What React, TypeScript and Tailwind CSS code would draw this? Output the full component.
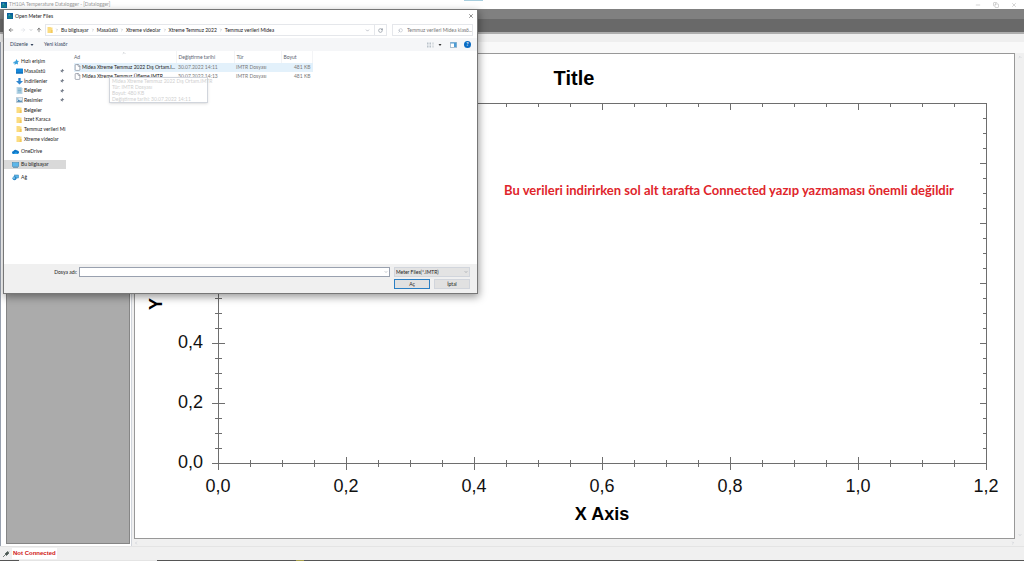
import { useState } from 'react';
import type { ReactNode } from 'react';
import {
  ArrowLeft,
  ArrowRight,
  ArrowUp,
  ChevronDown,
  ChevronRight,
  ChevronUp,
  Copy,
  File,
  Minus,
  Pin,
  RotateCw,
  Search,
  X,
} from 'lucide-react';

const CRUMBS = ['Bu bilgisayar', 'Masaüstü', 'Xtreme videolar', 'Xtreme Temmuz 2022', 'Temmuz verileri Midea'];

const FILES = [
  { name: 'Midea Xtreme Temmuz 2022 Dış Ortam.I...', date: '30.07.2022 14:11', type: 'IMTR Dosyası', size: '481 KB' },
  { name: 'Midea Xtreme Temmuz Üfleme.IMTR', date: '30.07.2022 14:13', type: 'IMTR Dosyası', size: '481 KB' },
];

// ---------- Icons ----------

function AppIcon() {
  return (
    <svg viewBox="0 0 12 12" className="size-[6px] shrink-0">
      <rect width="12" height="12" fill="#0b5c9c" />
      <path d="M1 11V6l4-4 4 2 2 5v2z" fill="#14808f" />
      <path d="M3 3h3v2H3z" fill="#4fb3c9" />
    </svg>
  );
}

function FolderIcon() {
  return (
    <svg viewBox="0 0 12 12" className="size-[6px] shrink-0">
      <path d="M1 0h6l1 1h3v11H1z" fill="#fbdc80" />
      <path d="M8 6h3v6H7z" fill="#f3c95c" />
    </svg>
  );
}

function StarIcon() {
  return (
    <svg viewBox="0 0 12 12" className="size-[6px] shrink-0">
      <path d="M7 0l1.500 3.500L12 4 9.500 7l.5 4-3.500-1.500L3 12l.5-4L1 6l4-1.500z" fill="#3aa0dc" />
      <path d="M0 7h4v1.500H0z" fill="#3aa0dc" />
    </svg>
  );
}

function DesktopIcon() {
  return (
    <svg viewBox="0 0 14 12" className="h-[6px] w-[7px] shrink-0">
      <rect y="1" width="14" height="10" rx="1" fill="#1687d9" />
      <rect y="9" width="14" height="2" fill="#0c66ac" />
    </svg>
  );
}

function DownloadIcon() {
  return (
    <svg viewBox="0 0 12 12" className="size-[7px] shrink-0">
      <path d="M4 0h4v5h4l-6 6-6-6h4z" fill="#2f86cf" />
    </svg>
  );
}

function DocumentIcon() {
  return (
    <svg viewBox="0 0 12 12" className="size-[7px] shrink-0">
      <path d="M1 0h8l2 2v10H1z" fill="#b9d6e6" />
      <path d="M3 3h6v1H3zM3 5.500h6v1H3zM3 8h6v1H3z" fill="#4f93b8" />
    </svg>
  );
}

function PictureIcon() {
  return (
    <svg viewBox="0 0 14 12" className="h-[6px] w-[7px] shrink-0">
      <rect x=".5" y="1.500" width="13" height="9" fill="#dfeaf2" stroke="#8fa6b5" />
      <path d="M1.500 9.500l4-4 3 2.500 2-1.500 2 3z" fill="#3277a8" />
      <rect x="2" y="3" width="3" height="2" fill="#5aa5d8" />
    </svg>
  );
}

function CloudIcon() {
  return (
    <svg viewBox="0 0 14 12" className="h-[6px] w-[7px] shrink-0">
      <path d="M3 10a3 3 0 010-6 4 4 0 017-1 3.500 3.500 0 011 7z" fill="#0f78c8" />
      <path d="M3 10l5-4 4 4z" fill="#2fa3ea" />
    </svg>
  );
}

function ComputerIcon() {
  return (
    <svg viewBox="0 0 14 12" className="h-[6px] w-[7px] shrink-0">
      <rect x=".5" y="1" width="13" height="8" fill="#5cb7ea" stroke="#3d83b2" />
      <path d="M2 10h10v1.500H2z" fill="#4a88b2" />
    </svg>
  );
}

function NetworkIcon() {
  return (
    <svg viewBox="0 0 14 12" className="h-[7px] w-[7px] shrink-0">
      <rect x="5" y="1" width="8" height="6" fill="#5cb7ea" stroke="#2b79b0" />
      <circle cx="5" cy="7.500" r="4" fill="#2a86c6" />
      <path d="M3 5l3 1-1 3-3-1z" fill="#8fd3f4" />
    </svg>
  );
}

function PlugIcon() {
  return (
    <svg viewBox="0 0 14 12" className="h-[6px] w-[7px] shrink-0">
      <path d="M0 12l4-4M4 6l5-5 3 3-5 5z" fill="#4d5a55" stroke="#4d5a55" strokeWidth="1.500" />
      <path d="M10 3l3-3" stroke="#8b9691" />
    </svg>
  );
}

// ---------- File dialog ----------

type Place = { label: string; icon: ReactNode; pinned?: boolean };

const QUICK: Place[] = [
  { label: 'Masaüstü', icon: <DesktopIcon />, pinned: true },
  { label: 'İndirilenler', icon: <DownloadIcon />, pinned: true },
  { label: 'Belgeler', icon: <DocumentIcon />, pinned: true },
  { label: 'Resimler', icon: <PictureIcon />, pinned: true },
  { label: 'Belgeler', icon: <FolderIcon /> },
  { label: 'Izzet Karaca', icon: <FolderIcon /> },
  { label: 'Temmuz verileri Mi', icon: <FolderIcon /> },
  { label: 'Xtreme videolar', icon: <FolderIcon /> },
];

function Sidebar() {
  return (
    <nav className="w-[62px] shrink-0 pt-[6px]">
      <ul className="grid h-[87px] auto-rows-fr">
        <li className="flex items-center gap-[2px] pl-[9px]">
          <StarIcon />
          <span>Hızlı erişim</span>
        </li>
        {QUICK.map((place, i) => (
          <li key={i} className="flex items-center pl-3">
            <span className="flex w-2 shrink-0">{place.icon}</span>
            <span className="whitespace-nowrap">{place.label}</span>
            {place.pinned && <Pin className="mr-[2px] ml-auto size-[4px] shrink-0 rotate-45 fill-gray-500 text-gray-500" />}
          </li>
        ))}
      </ul>
      <ul className="mt-[3px] space-y-1">
        <li className="flex h-[9px] items-center gap-[2px] pl-2">
          <CloudIcon />
          OneDrive
        </li>
        <li className="flex h-[9px] items-center gap-[2px] bg-[#d9d9d9] pl-2">
          <ComputerIcon />
          Bu bilgisayar
        </li>
        <li className="flex h-[9px] items-center gap-[2px] pl-2">
          <NetworkIcon />
          Ağ
        </li>
      </ul>
    </nav>
  );
}

function FileList() {
  return (
    <div className="relative min-w-0 flex-1 pl-2">
      <table className="w-[239px] table-fixed border-collapse text-left">
        <thead>
          <tr className="h-[12px] text-[#5c6470]">
            <th className="relative w-[102px] border-r border-gray-100 p-0 font-normal">
              Ad
              <ChevronUp className="absolute top-0 left-12 size-[4px] text-gray-500" />
            </th>
            <th className="w-[58px] border-r border-gray-100 p-0 pl-[2px] font-normal">Değiştirme tarihi</th>
            <th className="w-[47px] border-r border-gray-100 p-0 pl-[2px] font-normal">Tür</th>
            <th className="border-r border-gray-100 p-0 pl-[2px] font-normal">Boyut</th>
          </tr>
        </thead>
        <tbody>
          {FILES.map((file, i) => (
            <tr key={file.name} className={i === 0 ? 'h-[9px] bg-[#e3f1fb]' : 'h-[9px]'}>
              <td className="p-0">
                <div className="flex items-center gap-px whitespace-nowrap">
                  <File className="size-[7px] shrink-0 fill-white text-gray-500" strokeWidth={2} />
                  {file.name}
                </div>
              </td>
              <td className="p-0 pl-[2px] whitespace-nowrap text-[#7a7a7a]">{file.date}</td>
              <td className="p-0 pl-[2px] whitespace-nowrap text-[#7a7a7a]">{file.type}</td>
              <td className="p-0 pr-[2px] text-right whitespace-nowrap text-[#7a7a7a]">{file.size}</td>
            </tr>
          ))}
        </tbody>
      </table>

      {/* Hover tooltip, fading in over the rows */}
      <div className="absolute top-[26px] left-[43px] w-[99px] border border-gray-300 bg-white/60 px-[2px] leading-[6px] whitespace-nowrap text-[#cfcfcf] shadow-sm">
        <p>Midea Xtreme Temmuz 2022 Dış Ortam.IMTR</p>
        <p>Tür: IMTR Dosyası</p>
        <p>Boyut: 480 KB</p>
        <p>Değiştirme tarihi: 30.07.2022 14:11</p>
      </div>
    </div>
  );
}

function OpenDialog() {
  const [fileName, setFileName] = useState('');

  return (
    <section
      aria-label="Open Meter Files"
      className="absolute top-[9px] left-[3px] flex h-[285px] w-[475px] flex-col border border-[#777] bg-white font-['Lato','Liberation_Sans',sans-serif] text-[5px] leading-[7px] text-[#222] shadow-[1px_3px_8px_rgba(0,0,0,0.4)]"
    >
      <header className="flex h-[12px] items-center gap-[2px] px-[3px]">
        <AppIcon />
        <h2>Open Meter Files</h2>
        <button aria-label="Kapat" className="ml-auto">
          <X className="size-[6px]" />
        </button>
      </header>

      {/* Address bar */}
      <div className="flex h-[16px] items-center px-1">
        <button aria-label="Geri"><ArrowLeft className="size-[6px]" /></button>
        <button aria-label="İleri" className="ml-[6px]"><ArrowRight className="size-[6px] text-gray-300" /></button>
        <button aria-label="Son konumlar" className="ml-[3px]"><ChevronDown className="size-[4px] text-gray-500" /></button>
        <button aria-label="Yukarı" className="ml-[3px]"><ArrowUp className="size-[6px]" /></button>
        <div className="ml-[3px] flex h-[12px] flex-1 items-center border border-gray-200 pl-px">
          <FolderIcon />
          {CRUMBS.map((crumb) => (
            <span key={crumb} className="flex items-center whitespace-nowrap">
              <ChevronRight className="mx-[2px] size-[4px] text-gray-500" />
              {crumb}
            </span>
          ))}
          <ChevronDown className="mr-[4px] ml-auto size-[5px] text-gray-500" />
          <button aria-label="Yenile" className="flex h-full w-[12px] items-center justify-center border-l border-gray-200">
            <RotateCw className="size-[5px] text-gray-600" />
          </button>
        </div>
        <label className="ml-[5px] flex h-[12px] w-[81px] items-center gap-[4px] border border-gray-200 pl-[5px]">
          <Search className="size-[5px] shrink-0 -scale-x-100 text-gray-400" />
          <input
            aria-label="Ara"
            placeholder="Temmuz verileri Midea klasö..."
            className="w-full min-w-0 outline-none placeholder:text-[#777]"
          />
        </label>
      </div>

      {/* Command bar */}
      <div className="flex h-[13px] items-center bg-[#f5f6f8] px-[6px] text-[#33435c]">
        <button className="flex items-center gap-[2px]">
          Düzenle
          <svg viewBox="0 0 6 4" className="h-[2px] w-[4px]"><path d="M0 0h6L3 4z" fill="#33435c" /></svg>
        </button>
        <button className="ml-[10px]">Yeni klasör</button>
        <button aria-label="Görünüm" className="ml-auto flex items-center gap-[4px]">
          <svg viewBox="0 0 14 12" className="h-[6px] w-[7px]">
            <path d="M0 1h3v4H0zM5 1h3v4H5zM0 7h3v4H0zM5 7h3v4H5z" fill="#b9c2ca" />
            <path d="M10 2h4M10 4h4M10 8h4M10 10h4" stroke="#b9c2ca" />
          </svg>
          <svg viewBox="0 0 6 4" className="h-[2px] w-[4px]"><path d="M0 0h6L3 4z" fill="#333" /></svg>
        </button>
        <button aria-label="Önizleme bölmesi" className="ml-[8px]">
          <svg viewBox="0 0 14 12" className="h-[6px] w-[7px]">
            <rect x=".5" y="1.500" width="13" height="9" fill="#fff" stroke="#5d86a6" />
            <path d="M8 2h5v8H8zM1 1h12v2H1z" fill="#4c9bd4" />
          </svg>
        </button>
        <button aria-label="Yardım" className="ml-[7px] flex size-[7px] items-center justify-center rounded-full bg-[#0a6cc4] font-bold text-white">
          ?
        </button>
      </div>

      <div className="flex min-h-0 flex-1">
        <Sidebar />
        <FileList />
      </div>

      <footer className="grid gap-[2px] bg-[#f0f0f0] pt-[3px] pr-[7px] pb-[4px]">
        <div className="flex h-[10px] items-center">
          <label htmlFor="file-name" className="w-[75px] pr-[2px] text-right">Dosya adı:</label>
          <div className="relative h-full flex-1">
            <input
              id="file-name"
              value={fileName}
              onChange={(e) => setFileName(e.target.value)}
              className="block h-full w-full border border-gray-400 bg-white px-[2px] outline-none"
            />
            <ChevronDown className="absolute top-[3px] right-[2px] size-[4px] text-gray-600" />
          </div>
          <div className="relative ml-1 h-full w-[76px]">
            <select aria-label="Dosya türü" className="block h-full w-full appearance-none border border-gray-300 bg-[#e3e3e3] px-px">
              <option>Meter Files(*.IMTR)</option>
            </select>
            <ChevronDown className="absolute top-[3px] right-[2px] size-[4px] text-gray-600" />
          </div>
        </div>
        <div className="flex h-[10px] justify-end gap-1">
          <button className="w-[36px] border border-[#2a7fc4] bg-[#e1e1e1] leading-[6px]">Aç</button>
          <button className="w-[36px] border border-gray-300 bg-[#e1e1e1] leading-[6px]">İptal</button>
        </div>
      </footer>
    </section>
  );
}

// ---------- Chart ----------

const PLOT = { left: 83, right: 851, top: 49, bottom: 409 };
const X_LABELS = ['0,0', '0,2', '0,4', '0,6', '0,8', '1,0', '1,2'];
// the upper labels of the Y axis stay behind the dialog
const Y_LABELS = ['0,0', '0,2', '0,4'];

function Chart() {
  const { left, right, top, bottom } = PLOT;
  const xTicks = Array.from({ length: 25 }, (_, i) => ({ x: left + i * 32, major: i % 4 === 0 }));
  const yTicks = Array.from({ length: 25 }, (_, i) => ({ y: bottom - i * 15, major: i % 4 === 0 }));

  return (
    <svg viewBox="0 0 879 484" className="block h-full w-full font-['Liberation_Sans',Arial,sans-serif]">
      <g stroke="#6e6e6e" fill="none" shapeRendering="crispEdges">
        <rect x={left + 0.5} y={top + 0.5} width={right - left} height={bottom - top} />
        {xTicks.map(({ x, major }) => (
          <path
            key={x}
            d={`M${x + 0.5} ${bottom - (major ? 6 : 3)}v${major ? 13 : 7}M${x + 0.5} ${top}v${major ? 7 : 4}`}
          />
        ))}
        {yTicks.map(({ y, major }) => (
          <path
            key={y}
            d={`M${left - (major ? 6 : 3)} ${y + 0.5}h${major ? 13 : 7}M${right} ${y + 0.5}h${major ? -6 : -3}`}
          />
        ))}
      </g>
      <g fontSize="18" fill="#111">
        {X_LABELS.map((label, i) => (
          <text key={label} x={left + i * 128} y="438" textAnchor="middle">{label}</text>
        ))}
        {Y_LABELS.map((label, i) => (
          <text key={label} x="68" y={bottom + 5 - i * 60} textAnchor="end">{label}</text>
        ))}
      </g>
      <g fontWeight="bold" fill="#000" textAnchor="middle">
        <text x="439" y="31" fontSize="20">Title</text>
        <text x="467" y="466" fontSize="18">X Axis</text>
        <text transform="translate(27 229) rotate(-90)" fontSize="18">Y Axis</text>
      </g>
      <text x="594" y="141" fontSize="13" fontWeight="bold" fill="#e0252b" textAnchor="middle" className="font-['Lato','Noto_Sans',sans-serif]">
        Bu verileri indirirken sol alt tarafta Connected yazıp yazmaması önemli değildir
      </text>
    </svg>
  );
}

// ---------- Main window ----------

export default function App() {
  return (
    <div className="relative flex h-screen flex-col overflow-hidden bg-[#f0f0f0] font-['Liberation_Sans',Arial,sans-serif]">
      <header className="flex h-[9px] shrink-0 items-center gap-[2px] bg-white px-[1px] font-['Lato',sans-serif] text-[5px] leading-[7px] text-[#999]">
        <AppIcon />
        <h1>TH10A Temperature Datalogger - [Datalogger]</h1>
        <div className="ml-auto flex gap-3 pr-[6px] text-[#aaa]">
          <button aria-label="Simge durumuna küçült"><Minus className="size-[6px]" /></button>
          <button aria-label="Önceki boyut"><Copy className="size-[6px]" /></button>
          <button aria-label="Kapat"><X className="size-[6px]" /></button>
        </div>
      </header>
      <div className="h-[10px] shrink-0 bg-[#808080]" />
      <div className="h-[13px] shrink-0 bg-[#696969]" />
      <div className="h-[2px] shrink-0 bg-[#adadad]" />
      <div className="h-[8px] shrink-0 bg-[#efefef]" />

      <main className="flex min-h-0 flex-1 border-l border-gray-400">
        <aside className="flex w-[130px] shrink-0 bg-white pr-[1px] pb-[2px] pl-[5px]">
          <div className="flex-1 border border-[#858585] bg-[#ababab]" />
        </aside>
        <div className="flex min-w-0 flex-1 flex-col border-l border-gray-300 bg-[#f0f0f0] pl-[2px]">
          <div className="h-[11px] shrink-0 bg-[#f9f9f9]" />
          <div className="flex min-h-0 flex-1">
            <div className="min-w-0 flex-1 border border-[#989898] bg-white">
              <Chart />
            </div>
            <div className="flex w-[9px] flex-col items-center justify-between py-[2px] text-gray-400">
              <ChevronUp className="size-[4px]" />
              <ChevronDown className="size-[4px]" />
            </div>
          </div>
          <div className="flex h-[7px] shrink-0 items-center justify-between pr-[9px] text-gray-400">
            <ChevronRight className="size-[4px] rotate-180" />
            <ChevronRight className="size-[4px]" />
          </div>
        </div>
      </main>

      <footer className="flex h-[14px] shrink-0 items-center gap-[2px] border-t border-[#e4e4e4] pl-[3px]">
        <PlugIcon />
        <span className="bg-white px-[1px] text-[6px] leading-[11px] font-bold text-[#d01818]">Not Connected</span>
      </footer>
      <div className="flex h-px shrink-0 bg-[#555]">
        <div className="ml-[19px] w-[138px] bg-[#e4e4e4]" />
        <div className="ml-[139px] w-2 bg-[#a8a04a]" />
      </div>

      {/* Sliver of another window at the top edge */}
      <div className="absolute top-0 left-[464px] h-px w-[19px] bg-[#a9cfdf]" />

      <OpenDialog />
    </div>
  );
}
